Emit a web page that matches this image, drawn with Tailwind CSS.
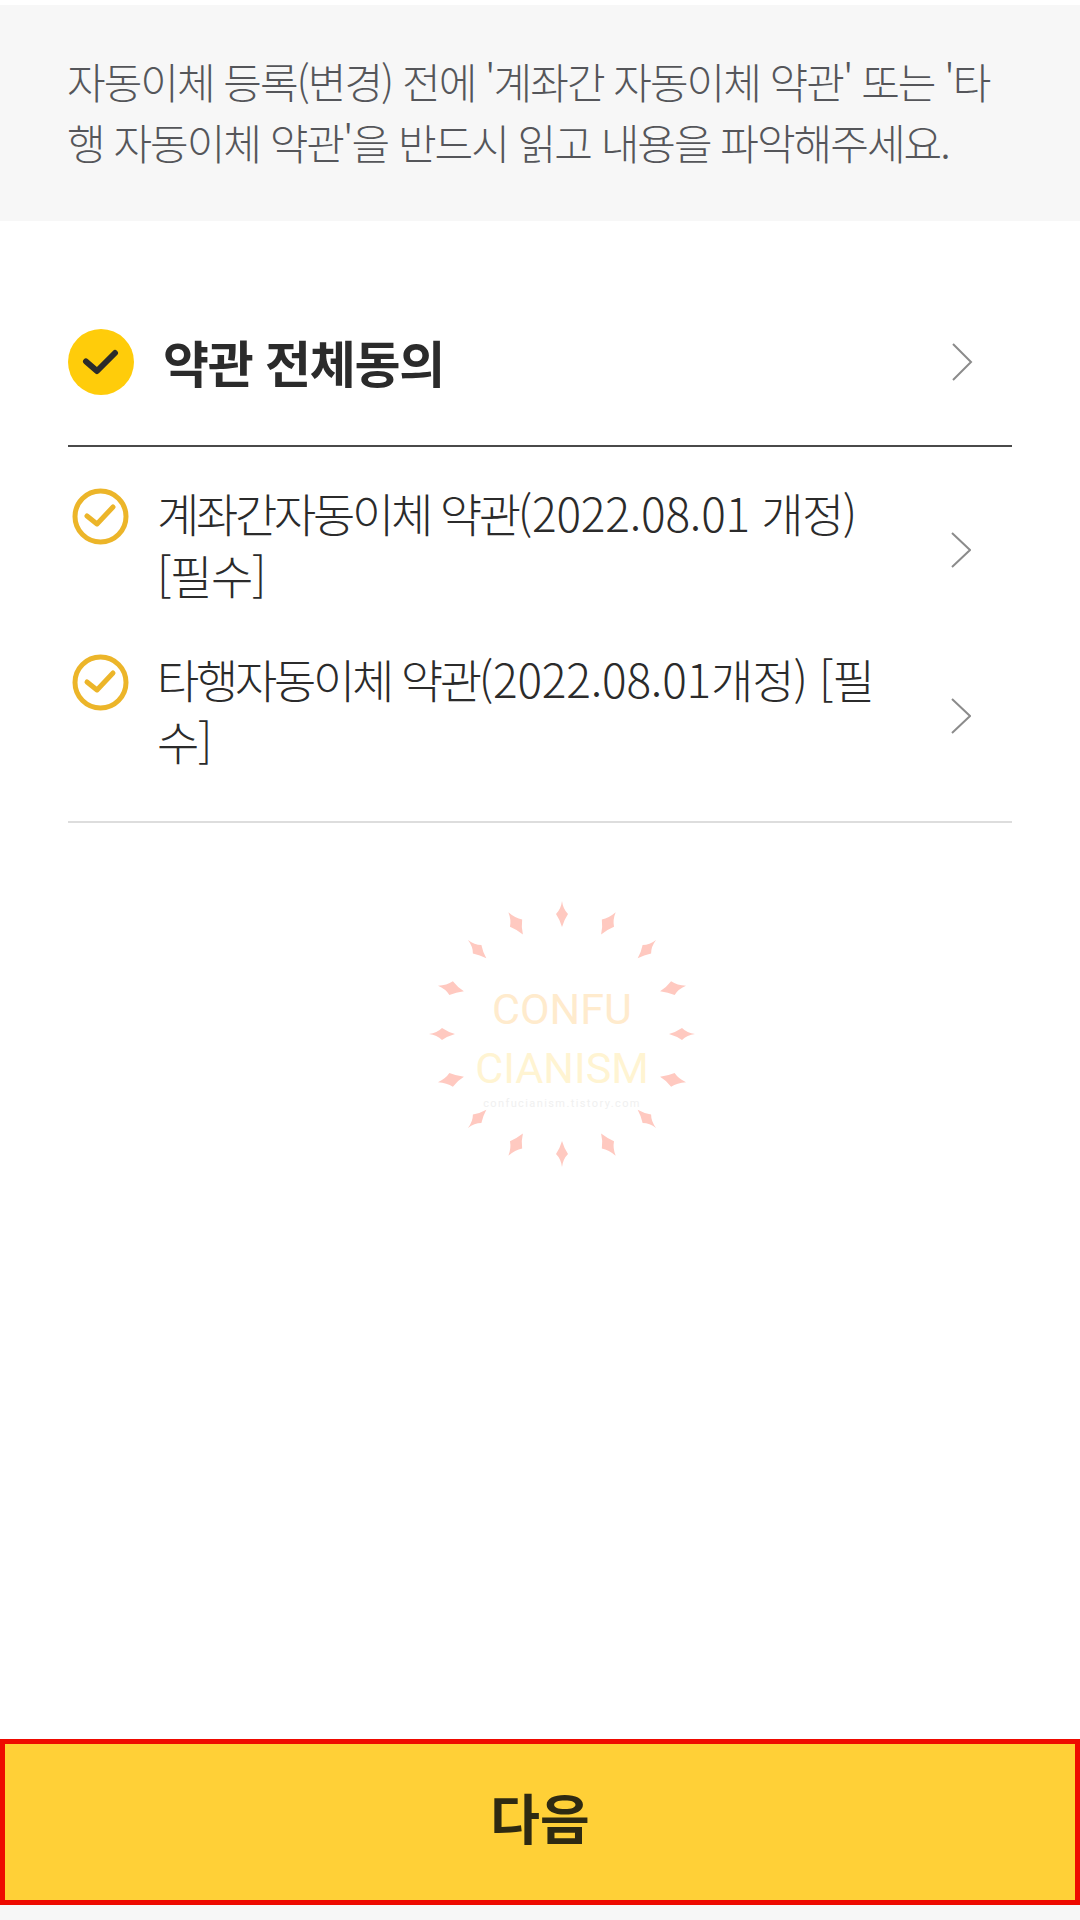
<!doctype html>
<html lang="ko">
<head>
<meta charset="utf-8">
<script src="https://cdn.jsdelivr.net/npm/@tailwindcss/browser@4"></script>
</head>
<body class="bg-white">
<div class="relative flex h-[1920px] w-[1080px] flex-col overflow-hidden bg-white font-['Noto_Sans_CJK_KR','Noto_Sans',sans-serif]">
  <div class="mt-[5px] flex h-[216px] flex-col justify-center bg-[#f7f7f7] pl-[67px] pb-[4px] text-[42px] leading-[61px] font-light tracking-[-2px] text-[#55565a]">
    <span class="block whitespace-nowrap">자동이체 등록(변경) 전에 '계좌간 자동이체 약관' 또는 '타</span>
    <span class="block whitespace-nowrap">행 자동이체 약관'을 반드시 읽고 내용을 파악해주세요.</span>
  </div>

  <div class="mx-[68px] flex h-[226px] items-center border-b-2 border-[#4a4a4a] pt-[58px]">
    <div class="flex h-[66px] w-[66px] shrink-0 items-center justify-center rounded-full bg-[#ffcc0a]">
      <svg class="h-[38px] w-[38px]" viewBox="0 0 38 38" fill="none"><path d="M4 18.5 L15 28 L33 10" stroke="#2b2b2b" stroke-width="6" stroke-linecap="round" stroke-linejoin="round"/></svg>
    </div>
    <span class="ml-[29px] -mt-[3px] whitespace-nowrap text-[50px] leading-[60px] font-bold tracking-[-1.3px] text-[#2b2b2b]">약관 전체동의</span>
    <svg class="ml-auto mr-[39px] h-[38px] w-[22px]" viewBox="0 0 22 38" fill="none"><path d="M2 1 L20 19 L2 37" stroke="#8b8b8b" stroke-width="2"/></svg>
  </div>

  <div class="mx-[68px] flex flex-col border-b-2 border-[#dddddd] pt-[36px] pb-[39px]">
    <div class="flex h-[133px] items-start pl-[4px]">
      <svg class="mt-[5px] h-[57px] w-[57px] shrink-0" viewBox="0 0 57 57" fill="none"><circle cx="28.5" cy="28.5" r="25.5" stroke="#ecb529" stroke-width="5"/><path d="M15 28 L25 36 L41 19" stroke="#ecb529" stroke-width="5" stroke-linecap="round" stroke-linejoin="round"/></svg>
      <div class="-mt-[2px] ml-[28px] text-[46px] leading-[62px] font-light tracking-[-3.3px] text-[#2b2b2b]">
        <span class="block whitespace-nowrap">계좌간자동이체 약관<span class="tracking-[-0.2px]">(2022.08.01</span><span class="tracking-[-1.6px]"> 개정)</span></span>
        <span class="block whitespace-nowrap tracking-[-1.4px]">[필수]</span>
      </div>
      <svg class="mt-[49px] ml-auto mr-[41px] h-[36px] w-[20px] shrink-0" viewBox="0 0 20 36" fill="none"><path d="M1 1 L19 18 L1 35" stroke="#8b8b8b" stroke-width="2"/></svg>
    </div>
    <div class="mt-[33px] flex h-[133px] items-start pl-[4px]">
      <svg class="mt-[5px] h-[57px] w-[57px] shrink-0" viewBox="0 0 57 57" fill="none"><circle cx="28.5" cy="28.5" r="25.5" stroke="#ecb529" stroke-width="5"/><path d="M15 28 L25 36 L41 19" stroke="#ecb529" stroke-width="5" stroke-linecap="round" stroke-linejoin="round"/></svg>
      <div class="-mt-[2px] ml-[28px] text-[46px] leading-[62px] font-light tracking-[-3.3px] text-[#2b2b2b]">
        <span class="block whitespace-nowrap">타행자동이체 약관<span class="tracking-[-0.2px]">(2022.08.01</span><span class="tracking-[-1px]">개정) [필</span></span>
        <span class="block whitespace-nowrap tracking-[-1.4px]">수]</span>
      </div>
      <svg class="mt-[49px] ml-auto mr-[41px] h-[36px] w-[20px] shrink-0" viewBox="0 0 20 36" fill="none"><path d="M1 1 L19 18 L1 35" stroke="#8b8b8b" stroke-width="2"/></svg>
    </div>
  </div>

  <!-- watermark -->
  <div class="absolute left-[422px] top-[894px] h-[280px] w-[280px]">
    <svg class="absolute inset-0" viewBox="-140 -140 280 280" fill="#ffc9c0">
      <path d="M0 -133 Q1 -125 6 -120 Q2 -114 0 -107 Q-2 -114 -6 -120 Q-1 -125 0 -133Z"/>
      <path transform="rotate(22.5)" d="M3 -133 Q3 -125 7 -119 Q2 -114 -2 -107 Q-3 -114 -7 -121 Q-1 -125 3 -133Z"/>
      <path transform="rotate(45)" d="M0 -133 Q1 -125 6 -120 Q2 -114 0 -107 Q-2 -114 -6 -120 Q-1 -125 0 -133Z"/>
      <path transform="rotate(67.5)" d="M3 -133 Q3 -125 7 -119 Q2 -114 -2 -107 Q-3 -114 -7 -121 Q-1 -125 3 -133Z"/>
      <path transform="rotate(90)" d="M0 -133 Q1 -125 6 -120 Q2 -114 0 -107 Q-2 -114 -6 -120 Q-1 -125 0 -133Z"/>
      <path transform="rotate(112.5)" d="M-3 -133 Q-3 -125 -7 -119 Q-2 -114 2 -107 Q3 -114 7 -121 Q1 -125 -3 -133Z"/>
      <path transform="rotate(135)" d="M0 -133 Q1 -125 6 -120 Q2 -114 0 -107 Q-2 -114 -6 -120 Q-1 -125 0 -133Z"/>
      <path transform="rotate(157.5)" d="M-3 -133 Q-3 -125 -7 -119 Q-2 -114 2 -107 Q3 -114 7 -121 Q1 -125 -3 -133Z"/>
      <path transform="rotate(180)" d="M0 -133 Q1 -125 6 -120 Q2 -114 0 -107 Q-2 -114 -6 -120 Q-1 -125 0 -133Z"/>
      <path transform="rotate(202.5)" d="M3 -133 Q3 -125 7 -119 Q2 -114 -2 -107 Q-3 -114 -7 -121 Q-1 -125 3 -133Z"/>
      <path transform="rotate(225)" d="M0 -133 Q1 -125 6 -120 Q2 -114 0 -107 Q-2 -114 -6 -120 Q-1 -125 0 -133Z"/>
      <path transform="rotate(247.5)" d="M3 -133 Q3 -125 7 -119 Q2 -114 -2 -107 Q-3 -114 -7 -121 Q-1 -125 3 -133Z"/>
      <path transform="rotate(270)" d="M0 -133 Q1 -125 6 -120 Q2 -114 0 -107 Q-2 -114 -6 -120 Q-1 -125 0 -133Z"/>
      <path transform="rotate(292.5)" d="M-3 -133 Q-3 -125 -7 -119 Q-2 -114 2 -107 Q3 -114 7 -121 Q1 -125 -3 -133Z"/>
      <path transform="rotate(315)" d="M0 -133 Q1 -125 6 -120 Q2 -114 0 -107 Q-2 -114 -6 -120 Q-1 -125 0 -133Z"/>
      <path transform="rotate(337.5)" d="M-3 -133 Q-3 -125 -7 -119 Q-2 -114 2 -107 Q3 -114 7 -121 Q1 -125 -3 -133Z"/>
    </svg>
    <div class="absolute inset-x-0 top-[86px] flex flex-col items-center font-['Roboto',sans-serif]">
      <span class="text-[43px] leading-[59px] text-[#ffebcd]">CONFU</span>
      <span class="text-[43px] leading-[59px] text-[#fff4d2]">CIANISM</span>
      <span class="-mt-[1px] text-[11px] leading-[14px] tracking-[1.4px] text-[#f0f0f0]">confucianism.tistory.com</span>
    </div>
  </div>

  <div class="mt-auto flex h-[166px] items-center justify-center border-[5px] border-[#ee0a00] bg-[#ffd037] pb-[12px] text-[54px] font-bold text-[#2e2a12]">다음</div>
  <div class="h-[15px] bg-[#f7f7f7]"></div>
</div>
</body>
</html>
